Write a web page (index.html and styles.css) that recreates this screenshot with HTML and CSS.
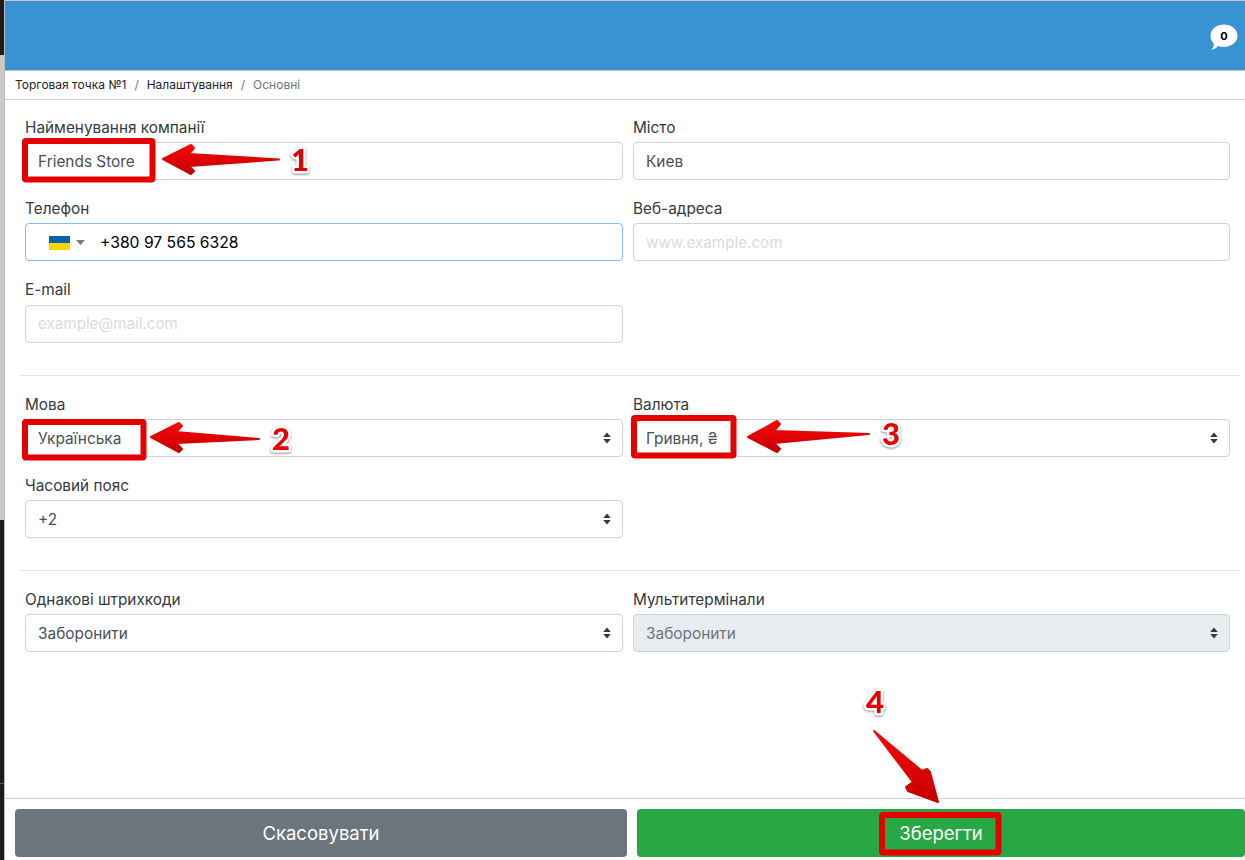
FILE: index.html
```html
<!DOCTYPE html>
<html lang="uk">
<head>
<meta charset="utf-8">
<title>Основні</title>
<link rel="stylesheet" href="styles.css">
</head>
<body>
<div class="app">
  <aside class="strip"><span class="strip-a"></span><span class="strip-b"></span><span class="strip-c"></span><span class="strip-line"></span><span class="strip-c strip-end"></span></aside>
  <div class="main">
    <header class="topbar">
      <div class="bubble">
        <svg width="28" height="27" viewBox="0 0 28 27"><path d="M14 0.500C21.500 0.500 27.500 5.300 27.500 11.800C27.500 18.200 21.500 23 14 23C11.800 23 9.800 22.700 8 22C6.200 24 3.500 25.700 1 26C2.800 24.500 3.800 22.300 3.900 19.800C1.800 17.800 0.500 15 0.500 11.800C0.500 5.300 6.500 0.500 14 0.500Z" fill="#fff"/></svg>
        <span class="bubble-count">0</span>
      </div>
    </header>
    <nav class="crumbs">
      <span class="crumb">Торговая точка №1</span><span class="sep">/</span><span class="crumb">Налаштування</span><span class="sep">/</span><span class="crumb current">Основні</span>
    </nav>
    <form class="form">
      <section class="grid">
        <div class="field"><label class="label">Найменування компанії</label><input class="control" type="text" value="Friends Store"></div>
        <div class="field"><label class="label">Місто</label><input class="control" type="text" value="Киев"></div>
        <div class="field"><label class="label">Телефон</label>
          <div class="control phone">
            <svg class="flag" width="21" height="14" viewBox="0 0 21 14"><rect width="21" height="7" fill="#0d5eaf"/><rect y="7" width="21" height="7" fill="#fdd300"/></svg>
            <svg class="flag-caret" width="9" height="5" viewBox="0 0 9 5"><path d="M0 0H9L4.500 5Z" fill="#7a7a7a"/></svg>
            <span class="phone-num">+380 97 565 6328</span>
          </div>
        </div>
        <div class="field"><label class="label">Веб-адреса</label><input class="control" type="text" placeholder="www.example.com"></div>
        <div class="field"><label class="label">E-mail</label><input class="control" type="text" placeholder="example@mail.com"></div>
      </section>
      <hr class="rule">
      <section class="grid">
        <div class="field"><label class="label">Мова</label><div class="select-wrap"><div class="control select">Українська</div><svg class="updown" width="8" height="12" viewBox="0 0 8 12"><path d="M4 0.500L7.800 5H0.200ZM4 11.500L0.200 7H7.800Z" fill="#343a40"/></svg></div></div>
        <div class="field"><label class="label">Валюта</label><div class="select-wrap"><div class="control select">Гривня, ₴</div><svg class="updown" width="8" height="12" viewBox="0 0 8 12"><path d="M4 0.500L7.800 5H0.200ZM4 11.500L0.200 7H7.800Z" fill="#343a40"/></svg></div></div>
        <div class="field"><label class="label">Часовий пояс</label><div class="select-wrap"><div class="control select">+2</div><svg class="updown" width="8" height="12" viewBox="0 0 8 12"><path d="M4 0.500L7.800 5H0.200ZM4 11.500L0.200 7H7.800Z" fill="#343a40"/></svg></div></div>
      </section>
      <hr class="rule">
      <section class="grid">
        <div class="field"><label class="label">Однакові штрихкоди</label><div class="select-wrap"><div class="control select">Заборонити</div><svg class="updown" width="8" height="12" viewBox="0 0 8 12"><path d="M4 0.500L7.800 5H0.200ZM4 11.500L0.200 7H7.800Z" fill="#343a40"/></svg></div></div>
        <div class="field"><label class="label">Мультитермінали</label><div class="select-wrap"><div class="control select disabled">Заборонити</div><svg class="updown" width="8" height="12" viewBox="0 0 8 12"><path d="M4 0.500L7.800 5H0.200ZM4 11.500L0.200 7H7.800Z" fill="#343a40"/></svg></div></div>
      </section>
    </form>
    <footer class="actions">
      <button class="btn btn-cancel" type="button">Скасовувати</button>
      <button class="btn btn-save" type="button">Зберегти</button>
    </footer>
  </div>
  <svg class="marks" width="1245" height="860" viewBox="0 0 1245 860">
    <defs>
      <linearGradient id="redfade" x1="0" y1="0" x2="0" y2="1">
        <stop offset="0" stop-color="#f80808"/>
        <stop offset="1" stop-color="#c40000"/>
      </linearGradient>
    </defs>
    <g class="boxes">
      <rect x="25" y="141" width="127.500" height="38.500" rx="1"/>
      <rect x="25" y="422" width="118.500" height="35.500" rx="1"/>
      <rect x="634" y="418" width="99.500" height="37.500" rx="1"/>
      <rect x="882" y="815" width="116.500" height="37.500" rx="1"/>
    </g>
    <g class="arrows">
      <path d="M163 159L191 145L194 148L189 154L279 159.500L189 166L194 171L191 174Z"/>
      <path d="M151 437L179 423L182 426L176 432L259 439L176 443L182 449L179 452Z"/>
      <path d="M748 437L777 421L780 424L774 431L869 434L774 443L780 449L777 452Z"/>
      <path d="M874 731L922 771L927 769L930 772L938 802L908 791L906 787L913 782Z"/>
    </g>
    <g class="nums">
      <text x="300" y="171">1</text>
      <text x="281" y="450">2</text>
      <text x="891" y="445">3</text>
      <text x="875" y="713">4</text>
    </g>
  </svg>
</div>
</body>
</html>
```
FILE: styles.css
```css
* { box-sizing: border-box; }
html, body { margin: 0; height: 100%; }
body { font-family: Inter, Roboto, "Liberation Sans", sans-serif; color: #212529; background: #fff; overflow: hidden; }
.app { position: relative; display: flex; width: 1245px; height: 860px; }
.strip { width: 5px; display: flex; flex-direction: column; flex: none; border-right: 1px solid #bdbdbd; }
.strip-a { height: 55px; background: #1b1c20; }
.strip-b { height: 465px; background: #c9c9c9; }
.strip-c { flex: 1; background: #1b1c20; }
.strip-line { height: 1px; background: #55585d; }
.strip-end { flex: none; height: 76px; }
.main { flex: 1; min-width: 0; display: flex; flex-direction: column; }
.topbar { height: 71px; background: #3793d1; border-top: 1px solid #c9c9c9; border-bottom: 1px solid #c4c4c4; display: flex; justify-content: flex-end; align-items: flex-start; padding: 23px 7px 0 0; flex: none; }
.bubble { position: relative; width: 28px; height: 27px; }
.bubble-count { position: absolute; left: 0; right: 0; top: 6px; text-align: center; font-size: 11px; line-height: 13px; font-weight: 700; color: #000; }
.crumbs { height: 29px; border-bottom: 1px solid #d0d0d0; padding: 0 0 2px 10px; display: flex; align-items: center; font-size: 12px; color: #212529; flex: none; }
.sep { color: #6c757d; padding: 0 8px; }
.current { color: #6c757d; }
.form { flex: 1; padding: 16px 15px 0 20px; display: flex; flex-direction: column; }
.grid { display: grid; grid-template-columns: 598px 597px; column-gap: 10px; row-gap: 17px; }
.label { display: block; font-size: 15.350px; line-height: 24px; margin-bottom: 2.200px; color: #343a40; }
.control { display: block; width: 100%; height: 38px; padding: 0 12px; border: 1px solid #ced4da; border-radius: 4px; background: #fff; font: 400 15.400px/36px Inter, Roboto, "Liberation Sans", sans-serif; color: #495057; outline: none; }
.control::placeholder { color: #d8dbdf; font-size: 15.200px; opacity: 1; }
.select { padding-top: 1px; }
.phone { display: flex; align-items: center; border-color: #80bdff; padding: 1px 12px 0 23px; color: #000; }
.flag { flex: none; }
.flag-caret { flex: none; margin-left: 6px; }
.phone-num { margin-left: 15px; font-size: 15.700px; }
.select-wrap { position: relative; }
.disabled { background: #e9ecef; color: #6c757d; }
.updown { position: absolute; right: 12px; top: 13px; }
.rule { border: 0; border-top: 1px solid #e4e4e4; margin: 32px -10px 17px -5px; }
.actions { height: 62px; border-top: 1px solid #d0d0d0; padding: 10px 0 3px 10px; display: flex; gap: 10px; flex: none; }
.btn { flex: 1; border: 0; border-radius: 4px; font: 400 18.500px/1 Inter, Roboto, "Liberation Sans", sans-serif; color: #fff; }
.btn-cancel { flex: none; width: 612px; background: #6c757d; }
.btn-save { background: #28a745; }
.marks { position: absolute; left: 0; top: 0; pointer-events: none; }
.boxes rect { fill: none; stroke: #e60000; stroke-width: 6px; }
.arrows path { fill: url(#redfade); stroke: url(#redfade); stroke-width: 2px; stroke-linejoin: round; }
.nums text { font: 900 31px Lato, "Liberation Sans", sans-serif; fill: #e60000; stroke: #fff; stroke-width: 5px; paint-order: stroke; text-anchor: middle; stroke-linejoin: round; filter: drop-shadow(0 1px 1px rgba(0, 0, 0, .45)); }
```
